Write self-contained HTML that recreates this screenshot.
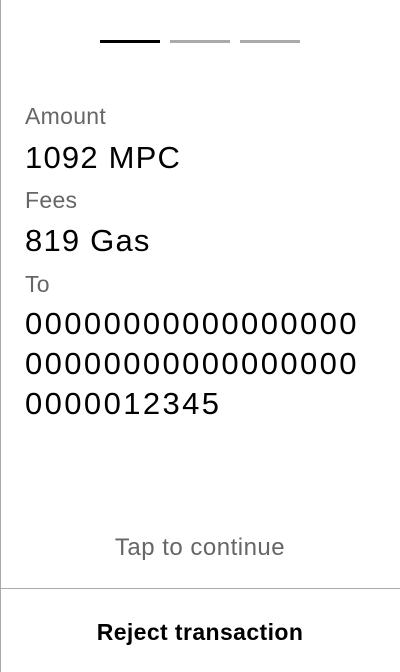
<!DOCTYPE html>
<html><head><meta charset="utf-8"><style>
html,body{margin:0;padding:0;background:#fff;}
body{width:400px;height:672px;position:relative;overflow:hidden;font-family:"Liberation Sans",sans-serif;}
.lb{position:absolute;left:0;top:0;width:1px;height:672px;background:#aaa;}
.bar{position:absolute;top:40px;height:3px;width:60px;}
.t{position:absolute;left:25px;white-space:nowrap;}
.lab{font-size:23px;line-height:30px;color:#666;letter-spacing:0.3px;}
.val{font-size:31px;line-height:40px;color:#000;letter-spacing:1.2px;}
</style></head><body>
<div class="lb"></div>
<div class="bar" style="left:100px;background:#000"></div>
<div class="bar" style="left:170px;background:#aaa"></div>
<div class="bar" style="left:240px;background:#aaa"></div>
<div class="t lab" style="top:101px">Amount</div>
<div class="t val" style="top:138px">1092 MPC</div>
<div class="t lab" style="top:185px">Fees</div>
<div class="t val" style="top:221px">819 Gas</div>
<div class="t lab" style="top:269px">To</div>
<div class="t val" style="top:304px;letter-spacing:2.4px">00000000000000000<br>00000000000000000<br>0000012345</div>
<div style="position:absolute;left:0;width:400px;top:533px;text-align:center;font-size:24px;line-height:30px;color:#666;letter-spacing:0.5px">Tap to continue</div>
<div style="position:absolute;left:1px;width:399px;top:588px;height:1px;background:#aaa"></div>
<div style="position:absolute;left:0;width:400px;top:617px;text-align:center;font-size:23px;line-height:30px;color:#000;font-weight:bold;letter-spacing:0.4px">Reject transaction</div>
</body></html>
